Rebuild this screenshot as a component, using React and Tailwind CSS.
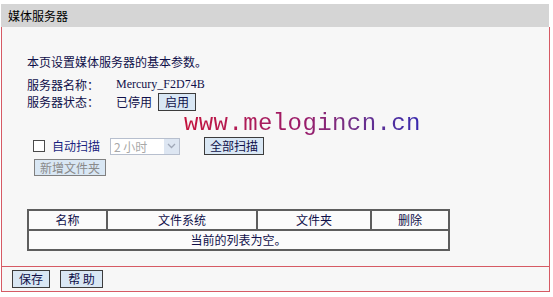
import React from "react";

// 媒体服务器 设置页

const btn =
  "h-[18px] border border-[#3c3c3c] bg-[#d9e7f4] px-[5px] text-[12px] leading-[16px] text-[#10104a]";

const Btn = ({ children, className = "" }) => (
  <button className={`${btn} ${className}`}>{children}</button>
);

export default function App() {
  const cols = [
    { label: "名称", w: "w-[79px]" },
    { label: "文件系统", w: "w-[150px]" },
    { label: "文件夹", w: "w-[114px]" },
    { label: "删除", w: "w-[78px]" },
  ];

  return (
    <div
      className="h-[297px] w-[553px] bg-white text-[12px] text-[#10104a]"
      style={{ fontFamily: '"Noto Sans CJK SC", "Liberation Sans", sans-serif' }}>
      <div className="pt-[4px]">
        <div className="ml-[1px] h-[23px] w-[548px] bg-[#d5d5d5] pl-[7px] text-[12px] leading-[23px] text-black">
          媒体服务器
        </div>

        <div className="ml-[1px] w-[549px] border-x border-[#d65a64] bg-[#f7f7f7]">
          <div className="h-[239px] overflow-hidden pl-[25px] pt-[26px]">
            <div className="h-[17px] leading-[17px]">本页设置媒体服务器的基本参数。</div>

            <div className="mt-[6px] flex h-[17px] items-center leading-[17px]">
              <span className="w-[89px]">服务器名称：</span>
              <span style={{ fontFamily: '"Liberation Serif", serif' }}>
                Mercury_F2D74B
              </span>
            </div>

            <div className="flex h-[18px] items-center">
              <span className="w-[89px]">服务器状态：</span>
              <span>已停用</span>
              <Btn className="ml-[6px] w-[38px]">启用</Btn>
            </div>

            <div
              className="ml-[157px] h-[26px] bg-gradient-to-r from-[#c4123c] via-[#9a1a6a] to-[#3326b0] bg-clip-text text-[24px] leading-[26px] tracking-[0.4px] text-transparent"
              style={{ fontFamily: '"Liberation Mono", monospace', width: 240 }}>
              www.melogincn.cn
            </div>

            <div className="flex h-[18px] items-center pl-[6px]">
              <span className="h-[12px] w-[12px] border border-[#4a4a4a] bg-white" />
              <span className="ml-[7px] text-[#1a1f80]">自动扫描</span>
              <div className="ml-[10px] flex h-[17px] w-[70px] items-center border border-[#b7bfce] bg-white text-[#a8a8a8]">
                <span className="flex-1 pl-[3px] leading-[15px]">2 小时</span>
                <span className="flex h-[15px] w-[15px] items-center justify-center bg-[#dde6f2]">
                  <svg width="9" height="6" viewBox="0 0 9 6">
                    <path d="M1 1 L4.5 4.5 L8 1" fill="none" stroke="#a0a8b8" strokeWidth="1.3" />
                  </svg>
                </span>
              </div>
              <Btn className="ml-[24px] w-[60px]">全部扫描</Btn>
            </div>

            <div className="mt-[4px] pl-[7px]">
              <button className="h-[17px] w-[72px] border border-[#808080] bg-[#d9e7f4] text-[12px] leading-[15px] text-[#8a8a8a]">
                新增文件夹
              </button>
            </div>

            <table className="mt-[32px] border-collapse border-2 border-[#5e5e5e] bg-[#fbfbfb]">
              <thead>
                <tr className="h-[20px]">
                  {cols.map((c) => (
                    <th
                      key={c.label}
                      className={`${c.w} border-2 border-[#5e5e5e] p-0 text-center text-[12px] font-normal leading-[16px]`}>
                      {c.label}
                    </th>
                  ))}
                </tr>
              </thead>
              <tbody>
                <tr className="h-[20px]">
                  <td colSpan={4} className="border-2 border-[#5e5e5e] p-0 text-center leading-[16px]">
                    当前的列表为空。
                  </td>
                </tr>
              </tbody>
            </table>
          </div>

          <div className="flex h-[26px] items-center gap-[10px] border-y border-[#d65a64] pl-[10px]">
            <Btn className="w-[38px]">保存</Btn>
            <Btn className="w-[43px]">帮 助</Btn>
          </div>
        </div>
      </div>
    </div>
  );
}
